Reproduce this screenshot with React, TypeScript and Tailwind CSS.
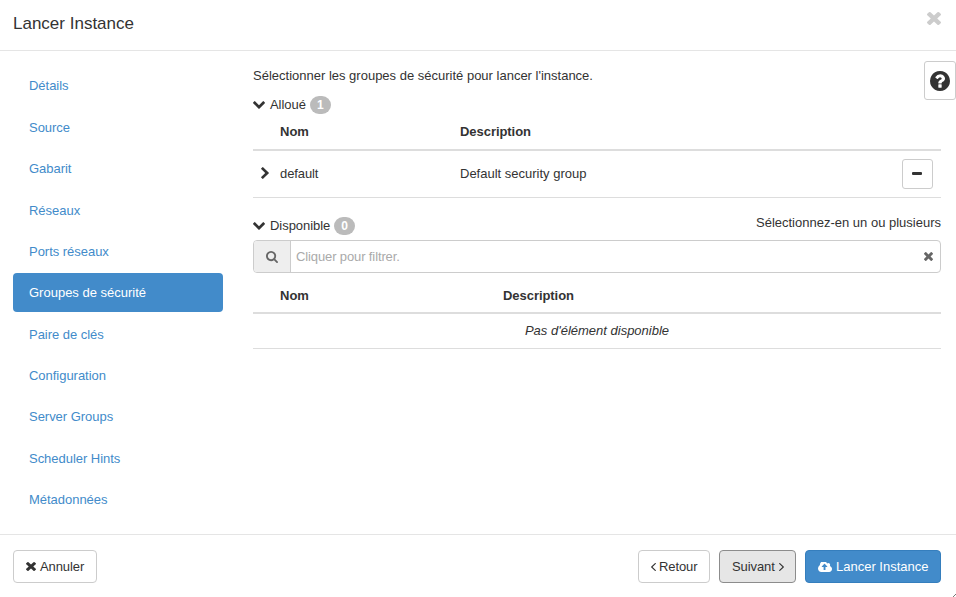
import React from "react";

type IconProps = { name: keyof typeof icons; className: string };

const icons = {
  down: {
    box: "90 533 1612 1035",
    d: "M1683 808l-742 741q-19 19-45 19t-45-19l-742-741q-19-19-19-45.5t19-45.5l166-165q19-19 45-19t45 19l531 531 531-531q19-19 45-19t45 19l166 165q19 19 19 45.5t-19 45.5z",
  },
  right: {
    box: "346 26 1036 1612",
    d: "M1363 877l-742 742q-19 19-45 19t-45-19l-166-166q-19-19-19-45t19-45l531-531-531-531q-19-19-19-45t19-45l166-166q19-19 45-19t45 19l742 742q19 19 19 45t-19 45z",
  },
  close: {
    box: "302 366 1188 1188",
    d: "M1490 1322q0 40-28 68l-136 136q-28 28-68 28t-68-28l-294-294-294 294q-28 28-68 28t-68-28l-136-136q-28-28-28-68t28-68l294-294-294-294q-28-28-28-68t28-68l136-136q28-28 68-28t68 28l294 294 294-294q28-28 68-28t68 28l136 136q28 28 28 68t-28 68l-294 294 294 294q28 28 28 68z",
  },
  question: {
    box: "128 128 1536 1536",
    d: "M1024 1376v-192q0-14-9-23t-23-9h-192q-14 0-23 9t-9 23v192q0 14 9 23t23 9h192q14 0 23-9t9-23zm256-672q0-88-55.5-163t-138.5-116-170-41q-243 0-371 213-15 24 8 42l132 100q7 6 19 6 16 0 25-12 53-68 86-92 34-24 86-24 48 0 85.5 26t37.5 59q0 38-20 61t-68 45q-63 28-115.5 86.5t-52.5 125.5v36q0 14 9 23t23 9h192q14 0 23-9t9-23q0-19 21.5-49.5t54.5-49.5q32-18 49-28.5t46-35 44.5-48 28-60.5 12.5-81zm384 192q0 209-103 385.5t-279.5 279.5-385.5 103-385.5-103-279.5-279.5-103-385.5 103-385.5 279.5-279.5 385.5-103 385.5 103 279.5 279.5 103 385.5z",
  },
  search: {
    box: "64 128 1664 1664",
    d: "M1216 832q0-185-131.5-316.5t-316.5-131.5-316.5 131.5-131.5 316.5 131.5 316.5 316.5 131.5 316.5-131.5 131.5-316.5zm512 832q0 52-38 90t-90 38q-54 0-90-38l-343-342q-179 124-399 124-143 0-273.5-55.5t-225-150-150-225-55.5-273.5 55.5-273.5 150-225 225-150 273.5-55.5 273.5 55.5 225 150 150 225 55.5 273.5q0 220-124 399l343 343q37 37 37 90z",
  },
  angle: {
    box: "621 461 582 998",
    d: "M1203 544q0 13-10 23l-393 393 393 393q10 10 10 23t-10 23l-50 50q-10 10-23 10t-23-10l-466-466q-10-10-10-23t10-23l466-466q10-10 23-10t23 10l50 50q10 10 10 23z",
  },
  upload: {
    box: "0 256 1920 1280",
    d: "M1280 864q0-14-9-23l-352-352q-9-9-23-9t-23 9l-351 351q-10 12-10 24 0 14 9 23t23 9h224v352q0 13 9.5 22.5t22.5 9.5h192q13 0 22.5-9.5t9.5-22.5v-352h224q13 0 22.5-9.5t9.5-22.5zm640 288q0 159-112.5 271.5t-271.5 112.5h-1088q-185 0-316.5-131.5t-131.5-316.5q0-130 70-240t188-165q-2-30-2-43 0-212 150-362t362-150q156 0 285.5 87t188.5 231q71-62 166-62 106 0 181 75t75 181q0 76-41 138 130 31 213.5 135.5t83.5 238.5z",
  },
};

function Icon({ name, className }: IconProps) {
  return (
    <svg viewBox={icons[name].box} preserveAspectRatio="none" fill="currentColor" className={`shrink-0 ${className}`}>
      <path d={icons[name].d} />
    </svg>
  );
}

const steps = [
  "Détails",
  "Source",
  "Gabarit",
  "Réseaux",
  "Ports réseaux",
  "Groupes de sécurité",
  "Paire de clés",
  "Configuration",
  "Server Groups",
  "Scheduler Hints",
  "Métadonnées",
];

function SectionTitle({ label, count }: { label: string; count: number }) {
  return (
    <div className="flex h-[18px] items-center">
      <Icon name="down" className="h-[8px] w-[12px]" />
      <span className="ml-[5px] tracking-[-0.05px]">{label}</span>
      <span className="ml-1 flex h-[18px] w-[21px] items-center justify-center rounded-full bg-[#bbb] text-xs font-bold text-white">
        {count}
      </span>
    </div>
  );
}

export default function App() {
  return (
    <div className="relative flex h-[597px] w-[956px] flex-col overflow-hidden bg-white font-['Liberation_Sans',Arial,sans-serif] text-[13px] leading-[18px] text-[#333]">
      <header className="flex h-[51px] shrink-0 justify-between border-b border-[#e5e5e5] pl-[13px] pr-[15px]">
        <h1 className="mt-[14px] text-[17px] leading-5">Lancer Instance</h1>
        <button aria-label="Fermer" className="mt-3 h-[13px] text-[#ccc]">
          <Icon name="close" className="h-[13px] w-[14px]" />
        </button>
      </header>

      <div className="flex h-[483px] shrink-0">
        <nav className="ml-[13px] mt-[15.28px] flex w-[210px] shrink-0 flex-col gap-[2px]">
          {steps.map((step) => (
            <a
              key={step}
              className={
                step === "Groupes de sécurité"
                  ? "flex h-[39.36px] shrink-0 items-center rounded bg-[#428bca] pl-4 pt-px text-white"
                  : "flex h-[39.36px] shrink-0 items-center rounded pl-4 pt-px tracking-[-0.03px] text-[#428bca]"
              }
            >
              {step}
            </a>
          ))}
        </nav>

        <main className="ml-[30px] w-[688px] pt-[16px]">
          <p>Sélectionner les groupes de sécurité pour lancer l'instance.</p>
          <div className="mt-[11px]">
            <SectionTitle label="Alloué" count={1} />
          </div>
          <div className="flex h-[37px] border-b-2 border-[#ddd] pl-[27px] pt-[9px] font-bold">
            <span className="w-[180px]">Nom</span>
            <span className="tracking-[-0.05px]">Description</span>
          </div>
          <div className="flex h-[47px] items-center border-b border-[#ddd]">
            <Icon name="right" className="-mt-0.5 ml-[8px] h-[12px] w-[8px]" />
            <span className="ml-[11px] w-[180px] tracking-[-0.1px]">default</span>
            <span>Default security group</span>
            <button className="ml-auto mr-2 flex h-[30px] w-[31px] items-center justify-center rounded-[3px] border border-[#ccc]">
              <span className="-mt-px mr-px h-[3px] w-[10px] rounded-[1px] bg-[#333]" />
            </button>
          </div>

          <div className="flex h-[42px] justify-between pt-[19px]">
            <SectionTitle label="Disponible" count={0} />
            <span className="-mt-[3px]">Sélectionnez-en un ou plusieurs</span>
          </div>
          <div className="flex h-[33px] items-center overflow-hidden rounded border border-[#ccc]">
            <span className="flex h-full w-[37px] items-center justify-center border-r border-[#ccc] bg-[#eee] text-[#666]">
              <Icon name="search" className="h-[12px] w-[12px]" />
            </span>
            <span className="ml-[5px] tracking-[-0.12px] text-[#aaa]">Cliquer pour filtrer.</span>
            <Icon name="close" className="ml-auto mr-[7px] h-[9px] w-[9px] text-[#666]" />
          </div>
          <div className="flex h-[41px] border-b-2 border-[#ddd] pl-[27px] pt-[14px] font-bold">
            <span className="w-[223px]">Nom</span>
            <span className="tracking-[-0.05px]">Description</span>
          </div>
          <div className="flex h-[35px] items-center justify-center border-b border-[#ddd] italic">
            Pas d'élément disponible
          </div>
        </main>
        <button
          aria-label="Aide"
          className="absolute right-0 top-[61px] flex h-[39px] w-8 items-center justify-center rounded-[3px] border border-[#ccc] bg-white"
        >
          <Icon name="question" className="h-5 w-5" />
        </button>
      </div>

      <footer className="flex h-[63px] shrink-0 items-start border-t border-[#e5e5e5] pl-[13px] pr-[15px] pt-[15px]">
        <button className="flex h-[33px] w-[84px] items-center rounded border border-[#ccc] pl-3">
          <Icon name="close" className="h-[9px] w-[10px]" />
          <span className="ml-[4px] tracking-[-0.1px]">Annuler</span>
        </button>
        <button className="ml-auto flex h-[33px] w-[72px] items-center rounded border border-[#ccc] pl-3">
          <Icon name="angle" className="h-[8px] w-[5px]" />
          <span className="ml-[3px] tracking-[-0.1px]">Retour</span>
        </button>
        <button className="ml-[9px] flex h-[33px] w-[77px] items-center rounded border border-[#8c8c8c] bg-[#e6e6e6] pl-3">
          <span className="tracking-[-0.1px]">Suivant</span>
          <Icon name="angle" className="ml-[4px] h-[8px] w-[5px] rotate-180" />
        </button>
        <button className="ml-[9px] flex h-[33px] w-[136px] items-center rounded border border-[#357ebd] bg-[#428bca] pl-3 text-white">
          <Icon name="upload" className="h-[10px] w-[14px]" />
          <span className="ml-[4px]">Lancer Instance</span>
        </button>
      </footer>
      <svg viewBox="0 0 3 3" className="absolute bottom-0 right-0 h-[3px] w-[3px]" stroke="#777" fill="none">
        <path d="M0 3L3 0" />
      </svg>
    </div>
  );
}
